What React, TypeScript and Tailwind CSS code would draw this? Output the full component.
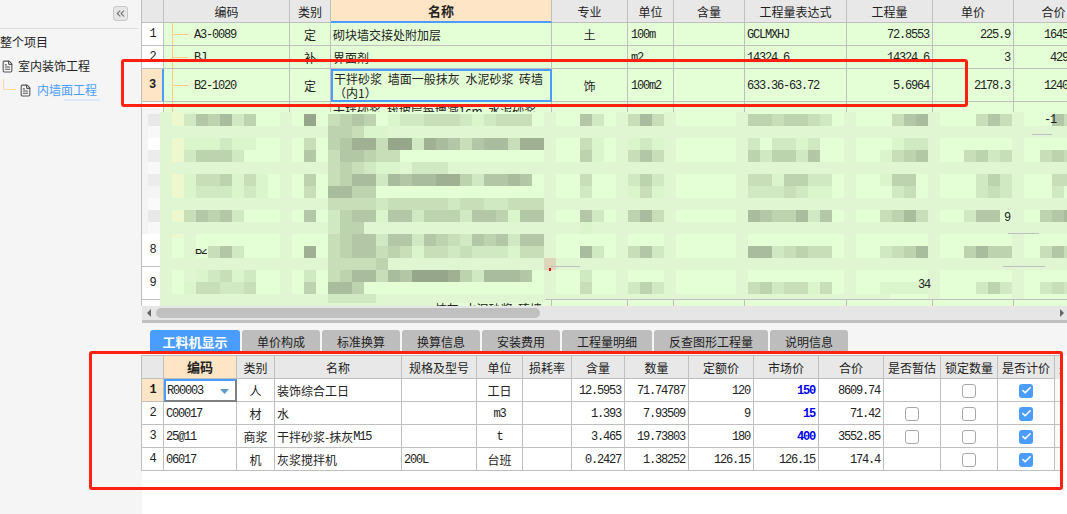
import { Check, ChevronsLeft, FileText } from 'lucide-react';

const MONO = "font-['Liberation_Mono','Noto_Sans_CJK_SC',monospace] text-[12px] tracking-[-1.2px]";
const TOP_COLS = 'grid grid-cols-[22px_126px_41px_221px_76px_46px_71px_102px_86px_81px_80px] w-[952px]';
const LOW_COLS = 'grid grid-cols-[22px_73px_38px_127px_75px_46px_49px_53px_64px_65px_65px_65px_57px_57px_57px_8px] w-[921px]';
const LINE = 'border-r border-b border-[#bfbfbf]';
const CELL = `${LINE} pt-px flex items-center overflow-hidden whitespace-nowrap`;
const HEAD = `${LINE} pt-px flex items-center justify-center overflow-hidden whitespace-nowrap bg-[#e8e8e8] text-[#222]`;

const TOP_HEADERS = ['', '编码', '类别', '名称', '专业', '单位', '含量', '工程量表达式', '工程量', '单价', '合价'];
const LOW_HEADERS = ['', '编码', '类别', '名称', '规格及型号', '单位', '损耗率', '含量', '数量', '定额价', '市场价', '合价', '是否暂估', '锁定数量', '是否计价', '是'];

type TopRow = {
  no: string;
  code?: string;
  kind?: string;
  name?: string;
  major?: string;
  unit?: string;
  expr?: string;
  qty?: string;
  price?: string;
  total?: string;
  totalPad?: string;
  active?: boolean;
};

const topRows: TopRow[] = [
  { no: '1', code: 'A3-0089', kind: '定', name: '砌块墙交接处附加层', major: '土', unit: '100m', expr: 'GCLMXHJ', qty: '72.8553', price: '225.9', total: '1645', totalPad: 'pl-[30px]' },
  { no: '2', code: 'BJ', kind: '补', name: '界面剂', unit: 'm2', expr: '14324.6', qty: '14324.6', price: '3', total: '429', totalPad: 'pl-[36px]' },
  { no: '3', code: 'B2-1020', kind: '定', name: '干拌砂浆 墙面一般抹灰 水泥砂浆 砖墙（内1）', major: '饰', unit: '100m2', expr: '633.36-63.72', qty: '5.6964', price: '2178.3', total: '1240', totalPad: 'pl-[30px]', active: true },
  { no: '4', name: '干拌砂浆 找坡层每增减1cm 水泥砂浆' },
  { no: '5' },
  { no: '6' },
  { no: '7' },
  { no: '8' },
  { no: '9' },
  { no: '10', name: '干拌砂浆 墙面一般抹灰 水泥砂浆 砖墙' },
];

const lowRows = [
  { no: '1', code: 'R00003', kind: '人', name: '装饰综合工日', spec: '', unit: '工日', unitMono: false, amount: '12.5953', count: '71.74787', base: '120', market: '150', marketBlue: true, total: '8609.74', est: false, selected: true },
  { no: '2', code: 'C00017', kind: '材', name: '水', spec: '', unit: 'm3', unitMono: true, amount: '1.393', count: '7.93509', base: '9', market: '15', marketBlue: true, total: '71.42', est: true, selected: false },
  { no: '3', code: '25@11', kind: '商浆', name: '干拌砂浆-抹灰', nameTail: 'M15', spec: '', unit: 't', unitMono: true, amount: '3.465', count: '19.73803', base: '180', market: '400', marketBlue: true, total: '3552.85', est: true, selected: false },
  { no: '4', code: '06017', kind: '机', name: '灰浆搅拌机', spec: '200L', unit: '台班', unitMono: false, amount: '0.2427', count: '1.38252', base: '126.15', market: '126.15', marketBlue: false, total: '174.4', est: false, selected: false },
];

const tabs = [
  { label: '单价构成', w: 'w-[78px]' },
  { label: '标准换算', w: 'w-[78px]' },
  { label: '换算信息', w: 'w-[78px]' },
  { label: '安装费用', w: 'w-[78px]' },
  { label: '工程量明细', w: 'w-[90px]' },
  { label: '反查图形工程量', w: 'w-[114px]' },
  { label: '说明信息', w: 'w-[78px]' },
];

// 打码区域：每 12px 一格，数字是深浅
type Run = [number, string];
const mosaic: [number, Run[]][] = [
  [114, [[184, '254624'], [304, '8'], [328, '34540122333212333'], [580, '52'], [628, '363'], [748, '4434432'], [892, '356'], [976, '353'], [1052, '53']]],
  [126, [[328, '44311']]],
  [138, [[184, '111211'], [304, '3'], [328, '457738827653566377'], [580, '31'], [628, '121'], [748, '202212'], [892, '122']]],
  [150, [[184, '24442'], [304, '5'], [328, '355433'], [580, '41'], [628, '353'], [748, '424425'], [880, '1345'], [964, '3423'], [1040, '343']]],
  [162, [[328, '343211'], [412, '222']]],
  [174, [[184, '1334131'], [304, '4'], [328, '34662656677425565'], [580, '3'], [628, '242'], [748, '3314422'], [880, '144'], [976, '242'], [1052, '33']]],
  [186, [[184, '1222121'], [304, '3'], [328, '6644'], [580, '2'], [628, '131'], [748, '2223211'], [892, '23'], [976, '232'], [1052, '2']]],
  [198, [[328, '333323333323322333']]],
  [210, [[184, '35452'], [304, '5'], [328, '245515524442554155'], [580, '52'], [628, '463'], [748, '6544625'], [880, '3463'], [964, '255'], [1040, '456']]],
  [222, [[328, '244'], [580, '1']]],
  [234, [[328, '345525525432545255']]],
  [246, [[208, '352'], [304, '7'], [328, '345534313323222133'], [580, '62'], [628, '352'], [748, '6623433'], [880, '2346'], [964, '4644'], [1040, '353']]],
  [258, [[328, '33334']]],
  [270, [[196, '12312'], [304, '2'], [328, '34663658887426665'], [580, '2']]],
  [282, [[184, '133223'], [304, '4'], [328, '664'], [580, '3'], [628, '242'], [748, '3423313'], [880, '1111'], [976, '242'], [1040, '232']]],
  [294, [[328, '2222']]],
];

const PALE_ROWS = [126, 162, 198, 222, 258];
const PALE_COLS = [160, 184, 280, 544, 616, 664, 736, 844, 928, 1012];
const LEFT_GREYS: [number, string][] = [
  [114, '#e8e8e8'], [126, '#f8f8f8'], [138, '#ffffff'], [150, '#ececec'], [162, '#f8f8f8'],
  [174, '#ececec'], [186, '#f5f5f5'], [198, '#fafafa'], [210, '#e8e8e8'], [222, '#f8f8f8'],
];

function shade(level: number) {
  const t = level / 9;
  const mix = (a: number, b: number) => Math.round(a + (b - a) * t);
  return `rgb(${mix(228, 140)},${mix(255, 155)},${mix(214, 128)})`;
}

function BlurOverlay() {
  return (
    <svg className="absolute left-0 top-0 pointer-events-none" width={1067} height={320} viewBox="0 0 1067 320">
      <rect x={142} y={108} width={18} height={126} fill="#f4f4f4" />
      {LEFT_GREYS.map(([y, fill]) => (
        <rect key={y} x={148} y={y} width={12} height={12} fill={fill} />
      ))}
      <rect x={160} y={112} width={907} height={187} fill="#e4ffd6" />
      <rect x={160} y={294} width={275} height={12} fill="#e0f6d3" />
      <rect x={435} y={294} width={110} height={9} fill="#e0f6d3" />
      <rect x={545} y={294} width={345} height={5} fill="#e0f6d3" />
      {PALE_COLS.map((x) => (
        <rect key={x} x={x} y={112} width={12} height={187} fill="#e0f6d3" />
      ))}
      <rect x={172} y={112} width={12} height={126} fill="#eef8cf" />
      {PALE_ROWS.map((y) => (
        <rect key={y} x={160} y={y} width={907} height={12} fill="#e0f6d3" />
      ))}
      {mosaic.map(([y, runs]) =>
        runs.map(([x, digits]) =>
          digits.split('').map((d, i) => (
            <rect key={`${y}-${x}-${i}`} x={x + i * 12} y={y} width={12} height={y === 294 ? 9 : 12} fill={shade(Number(d))} />
          )),
        ),
      )}
      <rect x={544} y={258} width={12} height={12} fill="#ddd6bb" />
      <rect x={549} y={268} width={2} height={3} fill="#ee1111" />
      <path d="M1032 134.5H1052M1008 233.5H1039M1003 266.5H1045M551 266.5H580" stroke="#bfbfbf" fill="none" />
    </svg>
  );
}

function Checkbox({ checked }: { checked?: boolean }) {
  if (checked) {
    return (
      <span className="w-[14px] h-[14px] rounded-[3px] bg-[#4a9dff] flex items-center justify-center">
        <Check size={11} strokeWidth={3.5} className="text-white" />
      </span>
    );
  }
  return <span className="w-[14px] h-[14px] rounded-[3px] border border-[#a8a8a8] bg-white" />;
}

function Sidebar() {
  return (
    <aside className="w-[142px] shrink-0 flex flex-col bg-[#f5f5f5] text-[12px] text-[#222]">
      <button className="ml-[113px] mt-[6px] w-[15px] h-[15px] rounded-[3px] border border-[#c8c8c8] bg-[#e6e6e6] flex items-center justify-center text-[#777]">
        <ChevronsLeft size={13} />
      </button>
      <div className="mt-[7px] w-[138px] h-px bg-[#dddddd]" />
      <div className="mt-[5px] h-[16px] leading-[16px] whitespace-nowrap">整个项目</div>
      <div className="mt-[8px] h-[16px] flex items-center">
        <FileText size={13} className="ml-[1px] text-[#555]" />
        <span className="ml-[4px] whitespace-nowrap">室内装饰工程</span>
      </div>
      <div className="mt-[8px] h-[16px] flex items-center">
        <span className="ml-[3px] -mt-[12px] w-[13px] h-[11px] border-l border-b border-[#ffd8a8]" />
        <FileText size={13} className="ml-[3px] text-[#555]" />
        <span className="ml-[5px] whitespace-nowrap text-[#4a9dff]">内墙面工程</span>
      </div>
      <div className="mt-[1px] ml-[64px] w-[36px] h-[2px] bg-[#dfe9f8]" />
    </aside>
  );
}

function TopGrid() {
  return (
    <div className="h-[306px] overflow-hidden bg-white border-l border-[#bfbfbf] -ml-px">
      <div className={`${TOP_COLS} h-[23px]`}>
        {TOP_HEADERS.map((h, i) =>
          h === '名称' ? (
            <div key={i} className="border-r border-[#bfbfbf] border-b-2 border-b-[#4a9dff] bg-[#fde5c6] flex items-center justify-center font-bold text-[13px] text-[#222]">
              {h}
            </div>
          ) : (
            <div key={i} className={HEAD}>{h}</div>
          ),
        )}
      </div>
      {topRows.map((r) => (
        <div key={r.no} className={`${TOP_COLS} ${r.no === '1' || r.no === '2' ? 'h-[23px]' : 'h-[33px]'} bg-[#e4ffd6] text-[#222]`}>
          {r.active ? (
            <div className={`${LINE} border-r-2 border-r-[#4a9dff] bg-[#fde5c6] flex items-center justify-center font-bold ${MONO}`}>{r.no}</div>
          ) : (
            <div className={`${LINE} bg-white flex items-center justify-center ${MONO}`}>{r.no}</div>
          )}
          <div className={`${CELL} relative pl-[30px] ${MONO}`}>
            <span className="absolute left-[8px] top-0 bottom-0 w-px bg-[#ffc98a]" />
            {r.no !== '10' && <span className="absolute left-[8px] top-1/2 w-[16px] h-px bg-[#ffc98a]" />}
            {r.code}
          </div>
          <div className={`${CELL} justify-center`}>{r.kind}</div>
          {r.active ? (
            <div className="border-2 border-[#4a9dff] pl-[1px] leading-[14px] flex items-center [word-spacing:3px]">{r.name}</div>
          ) : r.no === '1' || r.no === '2' ? (
            <div className={`${CELL} pl-[2px] [word-spacing:3px]`}>{r.name}</div>
          ) : (
            <div className={`${LINE} pl-[2px] pt-[2px] leading-[14px] overflow-hidden [word-spacing:3px]`}>{r.name}</div>
          )}
          <div className={`${CELL} justify-center`}>{r.major}</div>
          <div className={`${CELL} pl-[3px] ${MONO}`}>{r.unit}</div>
          <div className={CELL} />
          <div className={`${CELL} pl-[2px] ${MONO}`}>{r.expr}</div>
          <div className={`${CELL} justify-end pr-[3px] ${MONO}`}>{r.qty}</div>
          <div className={`${CELL} justify-end pr-[3px] ${MONO}`}>{r.price}</div>
          <div className={`${CELL} ${r.totalPad ?? ''} ${MONO}`}>{r.total}</div>
        </div>
      ))}
    </div>
  );
}

function ScrollBar() {
  return (
    <div className="h-[14px] bg-[#e6e6e6] flex items-center relative">
      <span className="ml-[5px] w-0 h-0 border-y-[4px] border-y-transparent border-r-[4px] border-r-[#666]" />
      <span className="ml-[5px] w-[384px] h-[10px] rounded-[5px] bg-[#c0c0c0]" />
      <span className="ml-auto mr-[3px] w-0 h-0 border-y-[4px] border-y-transparent border-l-[4px] border-l-[#666]" />
    </div>
  );
}

function Tabs() {
  return (
    <div className="mt-[7px] ml-[8px] h-[22px] flex gap-[2px]">
      <div className="w-[90px] pt-[2px] rounded-t-[3px] bg-[#4a9dff] text-white font-bold text-[13px] flex items-center justify-center">工料机显示</div>
      {tabs.map((t) => (
        <div key={t.label} className={`${t.w} pt-[2px] rounded-t-[3px] bg-[#bdbdbd] text-[#222] flex items-center justify-center`}>{t.label}</div>
      ))}
    </div>
  );
}

function LowGrid() {
  return (
    <div className="mt-[3px] flex-1 bg-white">
      <div className="w-[921px] border-l border-t border-[#bfbfbf] -ml-px">
        <div className={`${LOW_COLS} h-[23px]`}>
          {LOW_HEADERS.map((h, i) =>
            h === '编码' ? (
              <div key={i} className={`${LINE} bg-[#fde5c6] flex items-center justify-center font-bold text-[13px] text-[#222]`}>{h}</div>
            ) : h === '是' ? (
              <div key={i} className="bg-[#e8e8e8] pl-[4px] overflow-hidden flex items-center">{h}</div>
            ) : (
              <div key={i} className={HEAD}>{h}</div>
            ),
          )}
        </div>
        {lowRows.map((r) => (
          <div key={r.no} className={`${LOW_COLS} h-[23px] text-[#222] bg-white`}>
            {r.selected ? (
              <div className={`${LINE} bg-[#fde5c6] flex items-center justify-center font-bold ${MONO}`}>{r.no}</div>
            ) : (
              <div className={`${LINE} flex items-center justify-center ${MONO}`}>{r.no}</div>
            )}
            {r.selected ? (
              <div className={`relative flex items-center pl-[1px] border-l-2 border-t-2 border-l-[#4a9dff] border-t-[#4a9dff] border-r-2 border-b-2 border-r-[#808080] border-b-[#808080] ${MONO}`}>
                {r.code}
                <svg className="absolute right-[6px] top-[8px]" width="9" height="5" viewBox="0 0 9 5">
                  <polygon points="0,0 9,0 4.5,5" fill="#5b9bd0" />
                </svg>
              </div>
            ) : (
              <div className={`${CELL} pl-[2px] ${MONO}`}>{r.code}</div>
            )}
            <div className={`${CELL} justify-center`}>{r.kind}</div>
            <div className={`${CELL} pl-[2px]`}>
              {r.name}
              {r.nameTail && <span className={MONO}>{r.nameTail}</span>}
            </div>
            <div className={`${CELL} pl-[2px] ${MONO}`}>{r.spec}</div>
            <div className={`${CELL} justify-center ${r.unitMono ? MONO : ''}`}>{r.unit}</div>
            <div className={CELL} />
            <div className={`${CELL} justify-end pr-[3px] ${MONO}`}>{r.amount}</div>
            <div className={`${CELL} justify-end pr-[3px] ${MONO}`}>{r.count}</div>
            <div className={`${CELL} justify-end pr-[3px] ${MONO}`}>{r.base}</div>
            <div className={`${CELL} justify-end pr-[3px] ${MONO} ${r.marketBlue ? 'font-bold text-[#0000ee]' : ''}`}>{r.market}</div>
            <div className={`${CELL} justify-end pr-[3px] ${MONO}`}>{r.total}</div>
            <div className={`${CELL} justify-center`}>{r.est && <Checkbox />}</div>
            <div className={`${CELL} justify-center`}><Checkbox /></div>
            <div className={`${CELL} justify-center`}><Checkbox checked /></div>
            <div className="bg-[#fbfaf5] border-b border-[#bfbfbf]" />
          </div>
        ))}
      </div>
    </div>
  );
}

export default function App() {
  return (
    <div className="relative w-[1067px] h-[514px] flex overflow-hidden bg-[#f5f5f5] text-[12px] font-['Noto_Sans_CJK_SC',sans-serif]">
      <Sidebar />
      <main className="flex-1 min-w-0 flex flex-col">
        <TopGrid />
        <ScrollBar />
        <div className="h-[3px] bg-[#c0c0c0]" />
        <Tabs />
        <LowGrid />
      </main>

      {/* 打码和露出来的残字 */}
      <BlurOverlay />
      <span className={`absolute left-[1044px] top-[111px] text-[#222] ${MONO}`}>-1</span>
      <span className={`absolute left-[1004px] top-[209px] text-[#222] ${MONO}`}>9</span>
      <span className={`absolute left-[918px] top-[276px] text-[#222] ${MONO}`}>34</span>
      <div className={`absolute left-[195px] top-[249px] h-[6px] leading-[8px] overflow-hidden flex items-end text-[#222] ${MONO}`}>B2</div>

      {/* 红框标注 */}
      <div className="absolute left-[121px] top-[59px] w-[847px] h-[48px] border-[3px] border-[#ff2010] rounded-[3px]" />
      <div className="absolute left-[89px] top-[351px] w-[974px] h-[139px] border-[3px] border-[#ff2010] rounded-[3px]" />
    </div>
  );
}
